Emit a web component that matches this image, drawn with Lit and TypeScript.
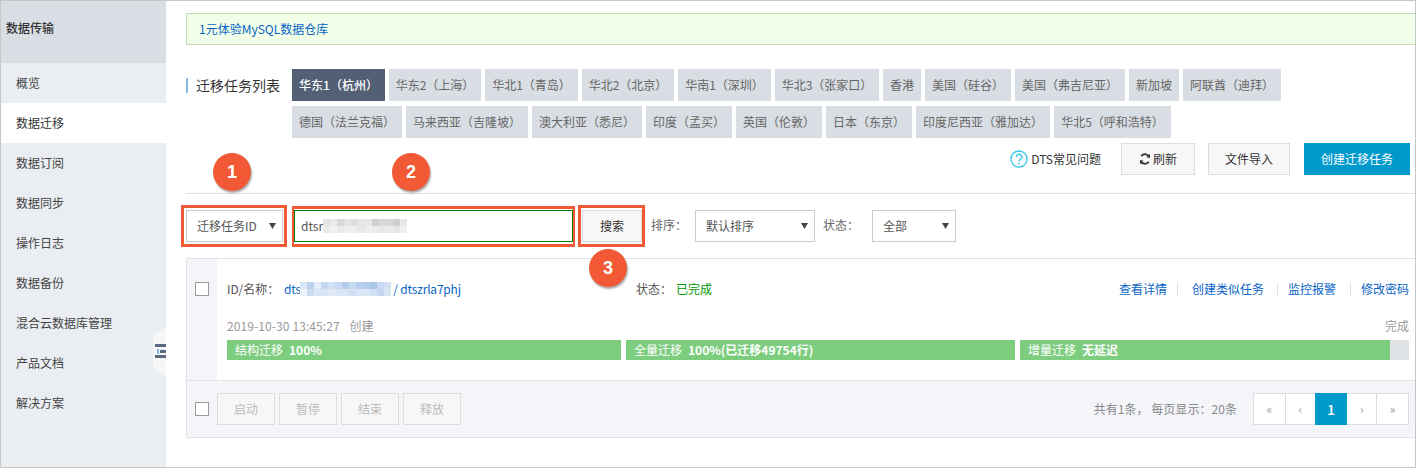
import { LitElement, html, css, svg } from "lit";
import { customElement } from "lit/decorators.js";

const ROW_TABS = [
  ["华东1（杭州）", 93], ["华东2（上海）", 92], ["华北1（青岛）", 93], ["华北2（北京）", 92],
  ["华南1（深圳）", 93], ["华北3（张家口）", 104], ["香港", 38], ["美国（硅谷）", 86],
  ["美国（弗吉尼亚）", 110], ["新加坡", 50], ["阿联酋（迪拜）", 98],
  ["德国（法兰克福）", 110], ["马来西亚（吉隆坡）", 122], ["澳大利亚（悉尼）", 110], ["印度（孟买）", 86],
  ["英国（伦敦）", 86], ["日本（东京）", 86], ["印度尼西亚（雅加达）", 134], ["华北5（呼和浩特）", 117],
] as [string, number][];

const MENU = ["概览", "数据迁移", "数据订阅", "数据同步", "操作日志", "数据备份", "混合云数据库管理", "产品文档", "解决方案"];

const GRAY_TOP = ["#e4e4e6", "#ebebed", "#d8d8dc", "#e6e6e8", "#dededf", "#e6e6e8", "#e8e8ea", "#cfcfd4", "#d8d8dc", "#d8d8da", "#cdcdd2", "#e6e7ea"];
const GRAY_BOT = ["#eaeaea", "#f0f0f0", "#ebebeb", "#efefef", "#efefef", "#e8e8e8", "#efefef", "#ebebeb", "#e8e8e8", "#ebebeb", "#e6e6e6", "#efefef"];
const BLUE_TOP = ["#d8e6f6", "#bcd2ee", "#e4eefa", "#c8d8f0", "#d2e0f4", "#c8daf2", "#b4ccec", "#c8daf2", "#b8ceee", "#b4ccec", "#a8c4e8", "#c8daf2", "#d2e0f4"];
const BLUE_BOT = ["#eef4fc", "#ccdaf2", "#d8e6f8", "#d8e6f8", "#e0e8f6", "#dae6f6", "#d8e6f6", "#d2e0f4", "#d8e6f6", "#d8e6f6", "#d2e0f4", "#c4d6f0", "#d8e6f6"];

const mosaic = (top: string[], bot: string[]) => html`<span class="mosaic" style="grid-template-columns:repeat(${top.length},7px)">
  ${[...top, ...bot].map((c) => html`<i style="background:${c}"></i>`)}
</span>`;

const caret = svg`<svg class="caret" width="7" height="6" viewBox="0 0 7 6"><path d="M0 0h7L3.5 6z" fill="#444"/></svg>`;

@customElement("app-root")
export class AppRoot extends LitElement {
  static styles = css`
    :host {
      display: flex; position: relative; box-sizing: border-box; width: 1416px; height: 468px;
      border: 1px solid #c6c6c6; overflow: hidden; background: #fff; color: #333;
      font: 12px/20px "Noto Sans CJK SC", "Liberation Sans", sans-serif;
    }
    * { box-sizing: border-box; }
    .side { width: 165px; flex: none; background: #eaedf1; }
    .side-head { height: 62px; background: #d9dee4; padding-left: 5px; line-height: 54px; font-weight: 500; color: #333; }
    .side-item { height: 40px; line-height: 40px; padding-left: 15px; color: #444; }
    .side-item.on { background: #fff; color: #333; }
    .handle { position: absolute; left: 152px; top: 326px; width: 13px; height: 50px; }

    .main { flex: 1; min-width: 0; padding: 12px 0 0 20px; }
    .banner { height: 32px; border: 1px solid #c6dcb6; border-right: 0; background: #f1ffe9; padding-left: 12px; line-height: 30px; color: #0a64c8; }
    .tabs-row { display: flex; margin-top: 24px; }
    .title { width: 106px; flex: none; height: 32px; display: flex; align-items: center; font-size: 14px; }
    .title::before { content: ""; width: 2px; height: 15px; background: #88b7e0; margin-right: 8px; }
    .tabs { display: flex; flex-wrap: wrap; gap: 5px 4px; width: 1000px; }
    .tab { height: 32px; line-height: 32px; text-align: center; background: #d9dee4; color: #666; white-space: nowrap; }
    .tab.on { background: #525f74; color: #fff; font-weight: 500; }

    .tools { display: flex; align-items: center; justify-content: flex-end; height: 32px; margin-top: 5px; padding-right: 5px; }
    .faq { display: flex; align-items: center; color: #333; margin-right: 20px; }
    .faq svg { margin-right: 3px; }
    .btn { height: 32px; display: flex; align-items: center; justify-content: center; border: 1px solid #ddd; background: #f7f7f7; color: #333; }
    .btn.refresh { width: 74px; margin-right: 13px; }
    .btn.refresh svg { margin-right: 2px; }
    .btn.import { width: 82px; margin-right: 14px; }
    .btn.primary { width: 106px; background: #0099cc; border-color: #0099cc; color: #fff; }
    .rule { height: 1px; background: #dddfe3; margin-top: 18px; }

    .filter { display: flex; align-items: flex-start; height: 32px; margin-top: 16px; }
    .sel { height: 32px; display: flex; align-items: center; justify-content: space-between; border: 1px solid #ccc; background: #fff; padding: 0 6px 0 10px; color: #555; }
    .sel.kind { width: 97px; }
    .input { width: 279px; height: 32px; margin-left: 11px; border: 1px solid #008000; padding-left: 6px; display: flex; align-items: center; color: #555; }
    .mosaic { display: inline-grid; grid-auto-rows: 7px; vertical-align: middle; }
    .mosaic i { display: block; }
    .btn.search { width: 60px; margin-left: 9px; }
    .lbl { color: #666; line-height: 30px; }
    .lbl.sort { margin-left: 9px; width: 44px; }
    .sel.order { width: 120px; }
    .lbl.state { margin-left: 8px; width: 49px; }
    .sel.all { width: 84px; }

    .card { margin-top: 16px; height: 180px; border: 1px solid #dfe2e6; border-width: 1px 0 1px 1px; }
    .row { display: flex; height: 121px; }
    .gut { width: 30px; flex: none; background: #f3f5f9; padding: 23px 0 0 8px; }
    .check { display: block; width: 14px; height: 14px; border: 1px solid #999; background: #fff; }
    .body { flex: 1; min-width: 0; padding: 20px 6px 0 10px; }
    .line1 { display: flex; height: 20px; }
    .idl { width: 57px; color: #555; }
    .idv { width: 352px; color: #0a64c8; display: flex; align-items: center; white-space: pre; letter-spacing: -.2px; }
    .idv .mosaic { margin-left: -1px; }
    .stl { width: 40px; color: #555; }
    .stv { color: #090; }
    .acts { margin-left: auto; display: flex; align-items: center; color: #0a64c8; }
    .sep { width: 1px; height: 13px; background: #dde; }
    .sep.a { margin: 0 14px 0 10px; }
    .sep.b { margin: 0 10px 0 13px; }
    .sep.c { margin: 0 10px 0 14px; }
    .line2 { display: flex; justify-content: space-between; margin-top: 17px; height: 20px; color: #999; }
    .time { margin-right: 7px; letter-spacing: .1px; }
    .bars { display: flex; gap: 5px; margin-top: 4px; }
    .seg { height: 20px; line-height: 20px; background: #7dcd7f; color: #fff; padding-left: 8px; white-space: nowrap; overflow: hidden; }
    .seg b { font-weight: 700; margin-left: 6px; }
    .seg.a { width: 394px; } .seg.b { width: 389px; }
    .track { width: 389px; height: 20px; background: #e0e3e6; }
    .track .seg { width: 370px; }

    .foot { display: flex; align-items: center; height: 57px; border-top: 1px solid #dfe2e6; background: #f3f5f9; padding-left: 8px; padding-right: 6px; }
    .foot .check { margin-right: 8px; }
    .off { width: 58px; height: 32px; line-height: 30px; text-align: center; border: 1px solid #ddd; background: #f7f7f7; color: #bbb; margin-right: 4px; }
    .total { margin-left: auto; color: #888; margin-right: 16px; letter-spacing: .05px; }
    .pager { display: flex; width: 156px; height: 32px; border: 1px solid #ddd; background: #fff; }
    .pg { text-align: center; line-height: 30px; color: #999; border-left: 1px solid #ddd; }
    .pg:nth-child(1) { width: 31px; border-left: 0; }
    .pg:nth-child(2) { width: 30px; }
    .pg:nth-child(4) { width: 29px; border-left: 0; }
    .pg:nth-child(5) { width: 32px; }
    .pg.cur { background: #0099cc; color: #fff; width: 33px; border: 0; font-weight: 500; font-size: 14px; margin: -1px 0; line-height: 32px; height: 32px; }

    .box { position: absolute; border: 3px solid #f25a36; }
    .box.mid { border-width: 3px 2px; }
    .badge {
      position: absolute; width: 38px; height: 38px; border-radius: 50%; background: #f25a36; color: #fff;
      text-align: center; font: 700 18px/38px "Liberation Sans", sans-serif; box-shadow: 1px 2px 2px #aaa;
    }
  `;

  render() {
    return html`
      <aside class="side">
        <div class="side-head">数据传输</div>
        ${MENU.map((m, i) => html`<div class="side-item ${i === 1 ? "on" : ""}">${m}</div>`)}
      </aside>
      <svg class="handle" viewBox="0 0 13 50">
        <path d="M13 0L0 8v33l13 9z" fill="#f5f6f8"/>
        <path d="M2 17h11v3H2zM2 28h11v3H2zM7 23h6v3H7z" fill="#5b6a80"/>
        <path d="M4 22h2v5H4z" fill="#7fb6e8"/>
      </svg>
      <main class="main">
        <div class="banner">1元体验MySQL数据仓库</div>
        <div class="tabs-row">
          <div class="title">迁移任务列表</div>
          <div class="tabs">
            ${ROW_TABS.map(([t, w], i) => html`<div class="tab ${i === 0 ? "on" : ""}" style="width:${w}px">${t}</div>`)}
          </div>
        </div>
        <div class="tools">
          <div class="faq">
            <svg width="18" height="18" viewBox="0 0 18 18">
              <circle cx="9" cy="9" r="8" fill="none" stroke="#3fc6e8" stroke-width="1.4"/>
              <path d="M6.4 7a2.7 2.7 0 1 1 4 2.3c-.9.5-1.4 1-1.4 2.2" fill="none" stroke="#3fc6e8" stroke-width="1.4"/>
              <circle cx="9" cy="13.6" r=".9" fill="#3fc6e8"/>
            </svg>
            DTS常见问题
          </div>
          <div class="btn refresh">
            <svg width="12" height="12" viewBox="0 0 12 12" fill="none" stroke="#333" stroke-width="1.8">
              <path d="M10.6 4.4A4.8 4.8 0 0 0 2.2 3.2"/><path d="M1.4 7.6a4.8 4.8 0 0 0 8.4 1.2"/>
              <path d="M11 .8v3.8H7.4z" fill="#333" stroke="none"/><path d="M1 11.2V7.4h3.6z" fill="#333" stroke="none"/>
            </svg>
            刷新
          </div>
          <div class="btn import">文件导入</div>
          <div class="btn primary">创建迁移任务</div>
        </div>
        <div class="rule"></div>
        <div class="filter">
          <div class="sel kind">迁移任务ID ${caret}</div>
          <div class="input">dtsr${mosaic(GRAY_TOP, GRAY_BOT)}</div>
          <div class="btn search">搜索</div>
          <div class="lbl sort">排序：</div>
          <div class="sel order">默认排序 ${caret}</div>
          <div class="lbl state">状态：</div>
          <div class="sel all">全部 ${caret}</div>
        </div>
        <section class="card">
          <div class="row">
            <div class="gut"><span class="check"></span></div>
            <div class="body">
              <div class="line1">
                <span class="idl">ID/名称：</span>
                <span class="idv">dts${mosaic(BLUE_TOP, BLUE_BOT)} / dtszrla7phj</span>
                <span class="stl">状态：</span>
                <span class="stv">已完成</span>
                <span class="acts">
                  <span>查看详情</span><span class="sep a"></span>
                  <span>创建类似任务</span><span class="sep b"></span>
                  <span>监控报警</span><span class="sep c"></span>
                  <span>修改密码</span>
                </span>
              </div>
              <div class="line2"><span><span class="time">2019-10-30 13:45:27</span> 创建</span><span>完成</span></div>
              <div class="bars">
                <div class="seg a">结构迁移<b>100%</b></div>
                <div class="seg b">全量迁移<b>100%(已迁移49754行)</b></div>
                <div class="track"><div class="seg">增量迁移<b>无延迟</b></div></div>
              </div>
            </div>
          </div>
          <div class="foot">
            <span class="check"></span>
            <div class="off">启动</div><div class="off">暂停</div><div class="off">结束</div><div class="off">释放</div>
            <span class="total">共有1条， 每页显示：20条</span>
            <div class="pager">
              <span class="pg">«</span><span class="pg">‹</span><span class="pg cur">1</span><span class="pg">›</span><span class="pg">»</span>
            </div>
          </div>
        </section>
      </main>
      <div class="box" style="left:180px;top:204px;width:106px;height:42px"></div>
      <div class="box mid" style="left:291px;top:205px;width:283px;height:41px"></div>
      <div class="box" style="left:577px;top:204px;width:67px;height:42px"></div>
      <div class="badge" style="left:212px;top:152px">1</div>
      <div class="badge" style="left:391px;top:152px">2</div>
      <div class="badge" style="left:588px;top:248px">3</div>
    `;
  }
}
